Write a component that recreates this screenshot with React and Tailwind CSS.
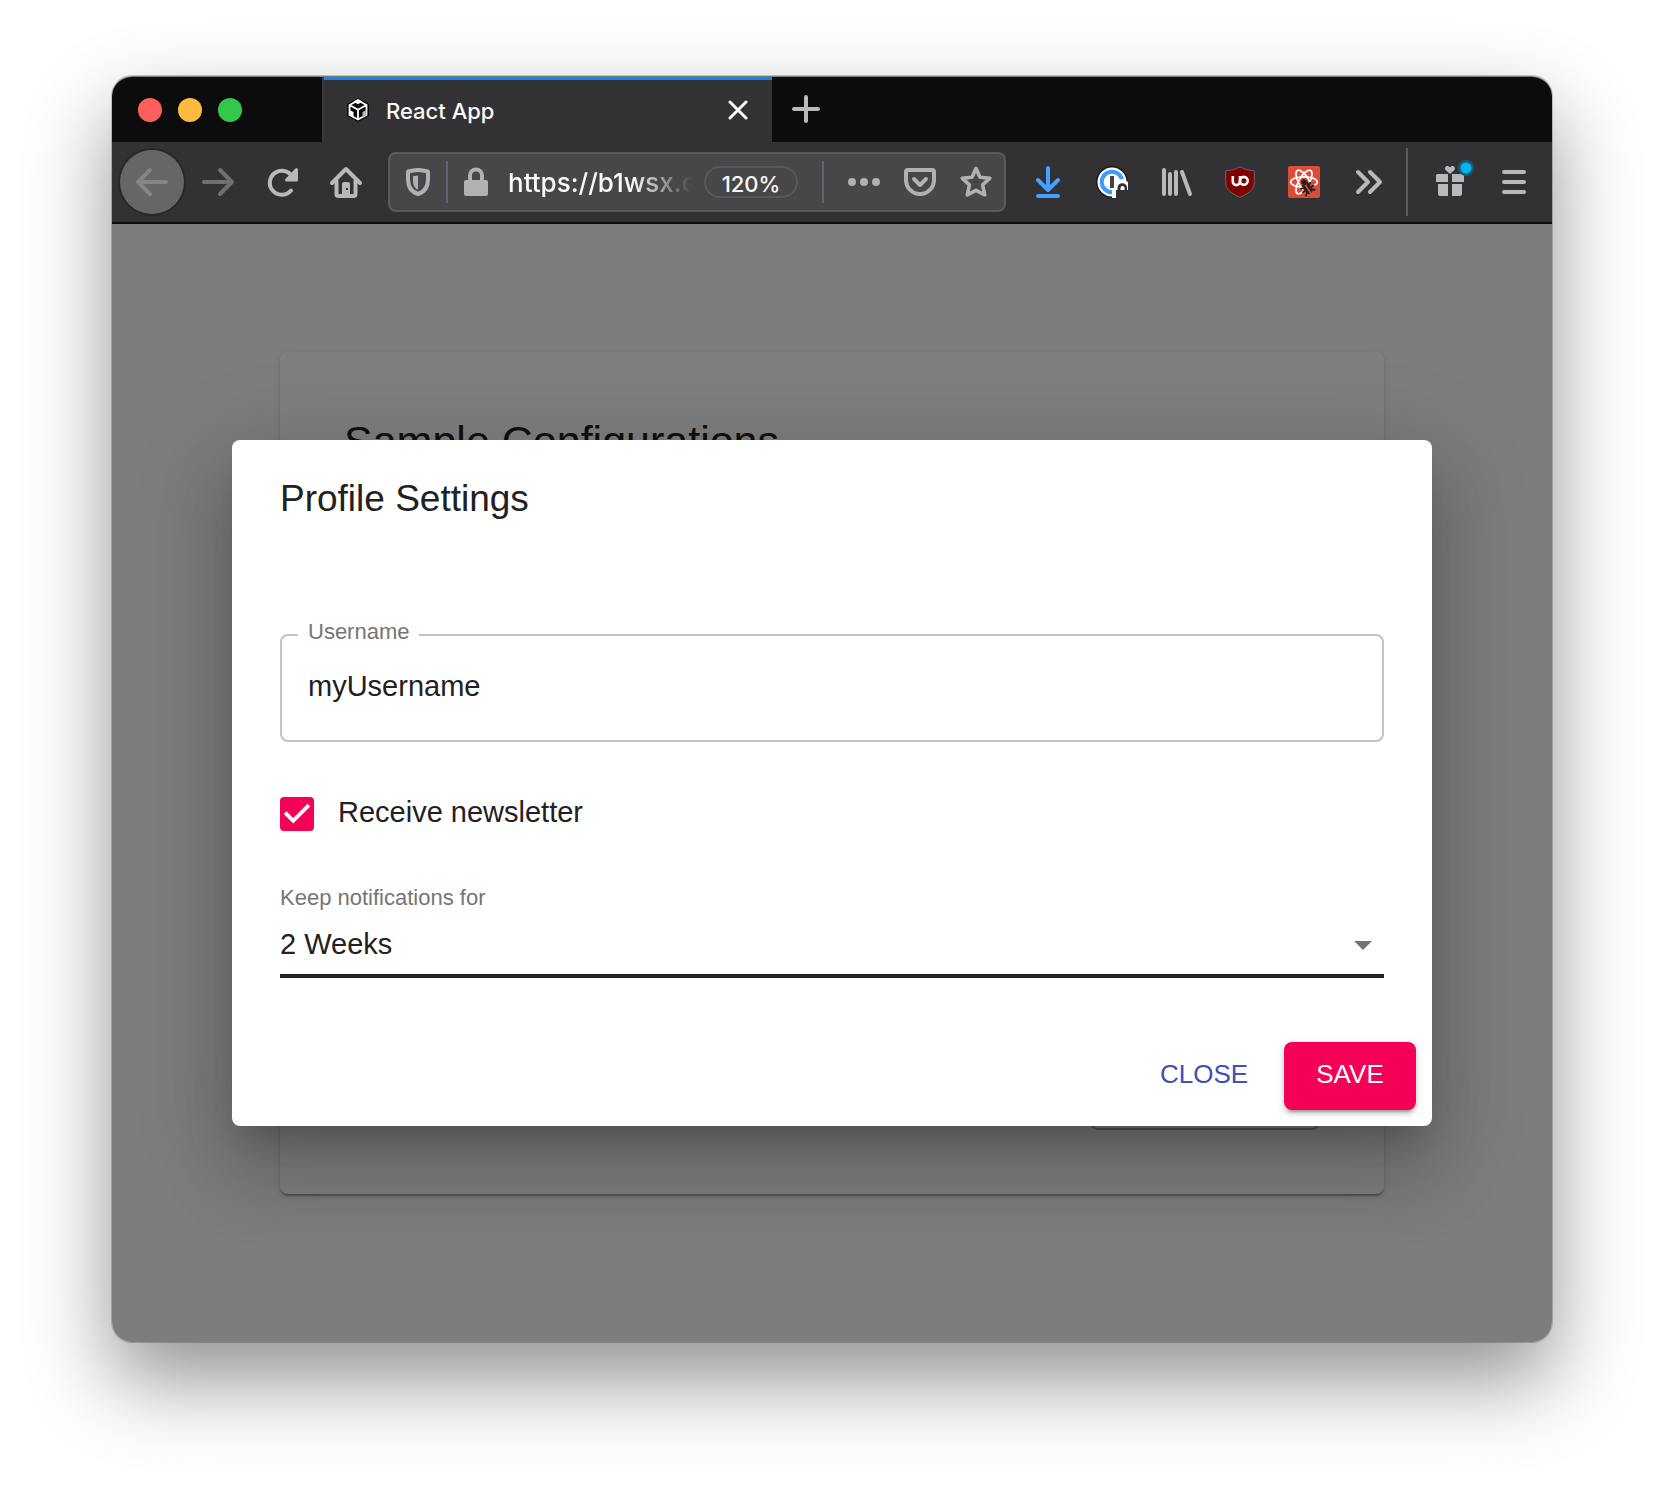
import React, { useState } from "react";

function Icon({ children, className = "size-8 text-[#b9b9ba]", strokeWidth = 4 }) {
  return (
    <svg
      viewBox="0 0 32 32"
      className={className}
      fill="none"
      stroke="currentColor"
      strokeWidth={strokeWidth}
      strokeLinecap="round"
      strokeLinejoin="round"
      overflow="visible"
      aria-hidden="true"
    >
      {children}
    </svg>
  );
}

function ToolButton({ label, children }) {
  return (
    <button type="button" aria-label={label} className="flex size-16 shrink-0 items-center justify-center">
      {children}
    </button>
  );
}

function FieldButton({ label, children }) {
  return (
    <button type="button" aria-label={label} className="flex h-14 w-14 shrink-0 items-center justify-center">
      {children}
    </button>
  );
}

function TabStrip() {
  return (
    <div className="flex h-[65px] bg-[#0c0c0c]">
      <div className="flex w-[210px] shrink-0 items-center gap-4 pl-[26px]">
        <button type="button" aria-label="Close window" className="size-6 rounded-full bg-[#ff5f5b]" />
        <button type="button" aria-label="Minimize window" className="size-6 rounded-full bg-[#febb40]" />
        <button type="button" aria-label="Zoom window" className="size-6 rounded-full bg-[#34c84a]" />
      </div>
      <div className="flex w-[450px] items-center border-l-2 border-[#3b3b3d] bg-[#323234] shadow-[inset_0_3px_0_#0a84ff]">
        <svg viewBox="0 0 24 26" className="ml-[22px] h-[26px] w-6 shrink-0" aria-hidden="true">
          <path d="M12 1 23 7v12l-11 6L1 19V7z" fill="#0b0b0b" />
          <path
            d="M12 3.500 20.500 8v10L12 22.500 3.500 18V8zM3.500 8 12 12.800 20.500 8M12 12.800V22.500"
            fill="none"
            stroke="#fff"
            strokeWidth="1.800"
            strokeLinejoin="round"
          />
          <path d="m7.500 4.500 4.500 2.700 4.500-2.700-4.500-2.500z" fill="#fff" />
          <path d="m3.500 13 4 2v5.500l-4-2.500z" fill="#fff" />
          <path d="m20.500 13-4 2v5.500l4-2.500z" fill="#b4b4b4" />
        </svg>
        <span className="ml-4 flex-1 pt-0.5 text-[22px] leading-7 font-medium text-[#f9f9fa]">React App</span>
        <button type="button" aria-label="Close tab" className="mr-6 flex size-5 items-center justify-center">
          <svg viewBox="0 0 20 20" className="size-5" stroke="#f9f9fa" strokeWidth="3" strokeLinecap="round" aria-hidden="true">
            <path d="m2 2 16 16M18 2 2 18" />
          </svg>
        </button>
      </div>
      <button type="button" aria-label="New tab" className="ml-5 flex w-7 items-center justify-center pb-px">
        <svg viewBox="0 0 28 28" className="size-7" stroke="#b9b9ba" strokeWidth="4" strokeLinecap="round" aria-hidden="true">
          <path d="M14 2v24M2 14h24" />
        </svg>
      </button>
    </div>
  );
}

function AddressBar() {
  return (
    <div className="mx-2.5 flex h-[60px] min-w-0 flex-1 items-center rounded-lg border-2 border-[#5a5a5c] bg-[#474749]">
      <FieldButton label="Tracking protection">
        <Icon className="size-8 text-[#b1b1b3]">
          <path d="M16 4C12.500 4 9 5 6 5.500V13c0 8 3.500 13 10 15 6.500-2 10-7 10-15V5.500C23 5 19.500 4 16 4z" />
          <path d="M16 9.500 11 10.300V14c0 5 1.500 8 5 9.700z" fill="currentColor" stroke="none" />
        </Icon>
      </FieldButton>
      <div className="h-[42px] w-0.5 shrink-0 bg-[#5f6470]" />
      <FieldButton label="Site information">
        <Icon className="size-8 text-[#b1b1b3]">
          <rect x="4" y="14" width="24" height="16" rx="2" fill="currentColor" stroke="none" />
          <path d="M10 15V9.500a6 6 0 0 1 12 0V15" />
        </Icon>
      </FieldButton>
      <input
        aria-label="Address"
        readOnly
        value="https://b1wsx.csb.app"
        className="ml-1 w-[184px] min-w-0 flex-1 [mask-image:linear-gradient(to_right,#000_68%,transparent_100%)] bg-transparent pt-0.5 text-[26px] leading-9 font-medium text-[#f9f9fa] outline-none"
      />
      <button
        type="button"
        className="ml-3 h-8 w-[94px] shrink-0 rounded-full border-2 border-[#58585a] pt-0.5 text-center text-[22px] leading-7 font-medium text-[#f9f9fa]"
      >
        120%
      </button>
      <div className="mr-3 ml-6 h-[42px] w-0.5 shrink-0 bg-[#5f6470]" />
      <FieldButton label="Page actions">
        <Icon className="size-8 text-[#b1b1b3]">
          <g fill="currentColor" stroke="none">
            <circle cx="4" cy="16" r="4" />
            <circle cx="16" cy="16" r="4" />
            <circle cx="28" cy="16" r="4" />
          </g>
        </Icon>
      </FieldButton>
      <FieldButton label="Save to Pocket">
        <Icon className="size-8 text-[#b1b1b3]">
          <path d="M4 4h24a2 2 0 0 1 2 2v8a14 14 0 0 1-28 0V6a2 2 0 0 1 2-2z" />
          <path d="m10 13 6 6 6-6" />
        </Icon>
      </FieldButton>
      <FieldButton label="Bookmark this page">
        <Icon className="size-8 text-[#b1b1b3]" strokeWidth={3.6}>
          <path d="m16 2.500 4 8.700 9.800 1-7.200 6.600 2.100 10L16 24.300l-8.700 4.500 2.100-10L2.200 12.200l9.800-1z" />
        </Icon>
      </FieldButton>
    </div>
  );
}

function Toolbar() {
  return (
    <div className="flex h-[82px] items-center border-b-2 border-[#0c0c0d] bg-[#323234] pr-1.5 pl-2">
      <button
        type="button"
        aria-label="Back"
        className="mr-0.5 flex size-16 shrink-0 items-center justify-center rounded-full bg-[#666666] ring-2 ring-[#28282a]"
      >
        <Icon className="size-8 text-[#858585]">
          <path d="M30 16H3M14 4 2 16l12 12" />
        </Icon>
      </button>
      <ToolButton label="Forward">
        <Icon className="size-8 text-[#707072]">
          <path d="M2 16h27M18 4l12 12-12 12" />
        </Icon>
      </ToolButton>
      <ToolButton label="Reload">
        <Icon>
          <path d="M27 12.500A12 12 0 1 0 25 24.500" />
          <path d="M30.500 3.500V14H20.500z" fill="currentColor" strokeWidth="3" />
        </Icon>
      </ToolButton>
      <ToolButton label="Home">
        <Icon>
          <path d="M2 17 16 3l14 14" />
          <path d="M6.500 15v13a2 2 0 0 0 2 2h15a2 2 0 0 0 2-2V15" />
          <path d="M12 30V18a2 2 0 0 1 2-2h4a2 2 0 0 1 2 2v12z" fill="currentColor" stroke="none" />
          <path d="M16 22h2v2h-2z" fill="#323234" stroke="none" />
        </Icon>
      </ToolButton>
      <AddressBar />
      <ToolButton label="Downloads">
        <Icon className="size-8 text-[#45a1ff]">
          <path d="M16 2v22M6 14l10 10 10-10M6 30h20" />
        </Icon>
      </ToolButton>
      <ToolButton label="Password manager">
        <svg viewBox="0 0 32 32" className="size-8" aria-hidden="true" overflow="visible">
          <circle cx="16" cy="16" r="16" fill="#1c1c1e" />
          <circle cx="16" cy="16" r="14.500" fill="#fff" />
          <circle cx="16" cy="16" r="10.300" fill="#fff" stroke="#3f9bfd" strokeWidth="4" />
          <rect x="14" y="10" width="4" height="12" fill="#444" />
          <path d="M16 32V23l4-3c0-4 3-7 7-7l5 3v16z" fill="#fff" />
          <path d="M20 32.500V24h1.500v-2a4.800 4.800 0 0 1 9.600 0v2H33v8.500z" fill="#323234" />
          <path d="M24.500 24v-2a2 2 0 0 1 4 0v2z" fill="#fff" />
        </svg>
      </ToolButton>
      <ToolButton label="Library">
        <Icon>
          <path d="M4 4v24M10 8v20M16 6v22M22 6l8 22" />
        </Icon>
      </ToolButton>
      <ToolButton label="Content blocker">
        <svg viewBox="0 0 32 32" className="size-8" aria-hidden="true">
          <path
            d="M16 .7c4 2.800 9 4 14.300 4v12c0 7-6 11-14.300 14.600C7.700 27.700 1.700 23.700 1.700 16.700v-12C7 4.700 12 3.500 16 .7z"
            fill="#800000"
            stroke="#6f6466"
            strokeWidth="1"
          />
          <g fill="none" stroke="#fff" strokeWidth="2.600">
            <path d="M8.800 10v5.500a3.600 3.600 0 0 0 7.200 0V10" />
            <circle cx="19.800" cy="14.800" r="3.900" />
          </g>
        </svg>
      </ToolButton>
      <ToolButton label="React developer tools">
        <svg viewBox="0 0 32 32" className="size-8" aria-hidden="true">
          <rect width="32" height="32" rx="2" fill="#dd4b39" />
          <g fill="none" stroke="#fff" strokeWidth="1.700">
            <ellipse cx="16" cy="16" rx="13.300" ry="5.200" />
            <ellipse cx="16" cy="16" rx="13.300" ry="5.200" transform="rotate(60 16 16)" />
            <ellipse cx="16" cy="16" rx="13.300" ry="5.200" transform="rotate(120 16 16)" />
          </g>
          <path d="M14.500 20.500 22 16l7 5-2 8H17z" fill="#dd4b39" />
          <circle cx="16" cy="16" r="2.800" fill="#231f20" />
          <g transform="rotate(-33 20 23)" fill="#231f20" stroke="#231f20" strokeWidth="1.700" strokeLinecap="round">
            <path d="M16.500 18.500h2.700v9.500c-2 0-2.700-1.500-2.700-3zM20.800 18.500h2.700V25c0 1.500-.7 3-2.700 3z" stroke="none" />
            <path d="M17 20l-2.500-1M17 23h-3M17 25.500l-2.300 2M23 20l2.500-1M23 23h3M23 25.500l2.300 2" />
            <path d="M17 17.500h6" />
          </g>
        </svg>
      </ToolButton>
      <ToolButton label="More tools">
        <Icon>
          <path d="m6 6 10 10L6 26M18 6l10 10-10 10" />
        </Icon>
      </ToolButton>
      <div className="mr-2.5 ml-1.5 h-[68px] w-0.5 shrink-0 bg-[#5b5b5d]" />
      <ToolButton label="What's new">
        <Icon>
          <g fill="currentColor" stroke="none">
            <path d="M3.500 8H14v8H2V9.500A1.500 1.500 0 0 1 3.500 8zM18 8h10.500A1.500 1.500 0 0 1 30 9.500V16H18zM4 18h10v12H6a2 2 0 0 1-2-2zM18 18h10v10a2 2 0 0 1-2 2h-8z" />
            <path d="M16 8 11.800 4.200C9.800 2 12 0 13.500 0 15 0 16 1.500 16 1.500S17 0 18.500 0C20 0 22.200 2 20.200 4.200z" />
          </g>
          <circle cx="32" cy="2" r="8" fill="#1c5a72" stroke="none" />
          <circle cx="32" cy="2" r="5.500" fill="#00b3f4" stroke="none" />
        </Icon>
      </ToolButton>
      <ToolButton label="Menu">
        <Icon>
          <path d="M6 6h20M6 16h20M6 26h20" />
        </Icon>
      </ToolButton>
    </div>
  );
}

function ConfigurationCard() {
  return (
    <section className="mx-[168px] flex min-h-[842px] flex-col items-start justify-between rounded-lg bg-white p-16 shadow-[0_4px_2px_-2px_rgba(0,0,0,0.2),0_2px_2px_0_rgba(0,0,0,0.14),0_2px_6px_0_rgba(0,0,0,0.12)]">
      <h1 className="text-[43px] leading-[50px] text-[#212121]">Sample Configurations</h1>
      <button
        type="button"
        aria-label="Edit profile"
        tabIndex={-1}
        className="h-[72px] w-[230px] self-end rounded-lg border-2 border-[#3f51b5]/50"
      />
    </section>
  );
}

function ProfileDialog() {
  const [username, setUsername] = useState("myUsername");
  const [newsletter, setNewsletter] = useState(true);
  const [period, setPeriod] = useState("2 Weeks");

  return (
    <div
      role="dialog"
      aria-modal="true"
      aria-labelledby="dialog-title"
      className="w-full max-w-[1200px] rounded-lg bg-white text-[29px] text-[#212121] shadow-[0_22px_30px_-14px_rgba(0,0,0,0.2),0_48px_76px_6px_rgba(0,0,0,0.14),0_18px_92px_16px_rgba(0,0,0,0.12)]"
    >
      <div className="px-12 pt-8">
        <h2 id="dialog-title" className="text-[37px] leading-[54px]">
          Profile Settings
        </h2>
        <div className="relative mt-[108px]">
          <label htmlFor="username" className="absolute -top-[18px] left-[18px] bg-white px-2.5 text-[22px] leading-8 text-[#757575]">
            Username
          </label>
          <input
            id="username"
            value={username}
            onChange={(e) => setUsername(e.target.value)}
            className="block h-[108px] w-full rounded-lg border-2 border-[#c4c4c4] px-[26px] pb-1 outline-none"
          />
        </div>
        <label className="mt-[52px] flex h-10 items-center gap-6">
          <span className="relative flex size-[34px] shrink-0">
            <input
              type="checkbox"
              checked={newsletter}
              onChange={(e) => setNewsletter(e.target.checked)}
              className="peer size-full appearance-none rounded border-4 border-[#757575] checked:border-[#f50057] checked:bg-[#f50057]"
            />
            <svg
              viewBox="0 0 18 18"
              className="pointer-events-none absolute inset-0 hidden size-full peer-checked:block"
              fill="#fff"
              aria-hidden="true"
            >
              <path d="M7 14 2 9l1.410-1.410L7 11.170l7.590-7.590L16 5z" />
            </svg>
          </span>
          <span className="pb-1 leading-9">Receive newsletter</span>
        </label>
        <label htmlFor="period" className="mt-12 block text-[22px] leading-8 text-[#757575]">
          Keep notifications for
        </label>
        <div className="relative">
          <select
            id="period"
            value={period}
            onChange={(e) => setPeriod(e.target.value)}
            className="block h-16 w-full appearance-none border-b-4 border-[#212121] bg-white pt-0.5 outline-none"
          >
            <option>2 Weeks</option>
          </select>
          <svg
            viewBox="0 0 18 9"
            className="pointer-events-none absolute top-[27px] right-3 h-[9px] w-[18px]"
            fill="#757575"
            aria-hidden="true"
          >
            <path d="M0 0h18L9 9z" />
          </svg>
        </div>
      </div>
      <div className="mt-16 flex justify-end gap-4 pr-4 pb-4 text-[26px]">
        <button type="button" className="h-[68px] w-[128px] rounded-lg pb-1 text-[#3f51b5]">
          CLOSE
        </button>
        <button
          type="button"
          className="h-[68px] w-[132px] rounded-lg bg-[#f50057] pb-1 text-white shadow-[0_6px_2px_-4px_rgba(0,0,0,0.2),0_4px_4px_0_rgba(0,0,0,0.14),0_2px_10px_0_rgba(0,0,0,0.12)]"
        >
          SAVE
        </button>
      </div>
    </div>
  );
}

export default function App() {
  return (
    <main className="min-h-screen bg-white px-28 pt-[76px] pb-[148px]">
      <div className="rounded-[20px] shadow-[0_0_0_1px_rgba(0,0,0,0.2),0_38px_84px_rgba(0,0,0,0.43)]">
        <div className="overflow-hidden rounded-[20px] border-t border-[#7c7c7c]">
          <header className="font-['Inter',sans-serif]">
            <TabStrip />
            <Toolbar />
          </header>
          <div className="relative bg-[#fafafa] pt-32 pb-[148px] font-['Liberation_Sans',Arial,sans-serif]">
            <ConfigurationCard />
            <div className="absolute inset-0 flex items-center justify-center bg-black/50 px-[120px]">
              <ProfileDialog />
            </div>
          </div>
        </div>
      </div>
    </main>
  );
}
